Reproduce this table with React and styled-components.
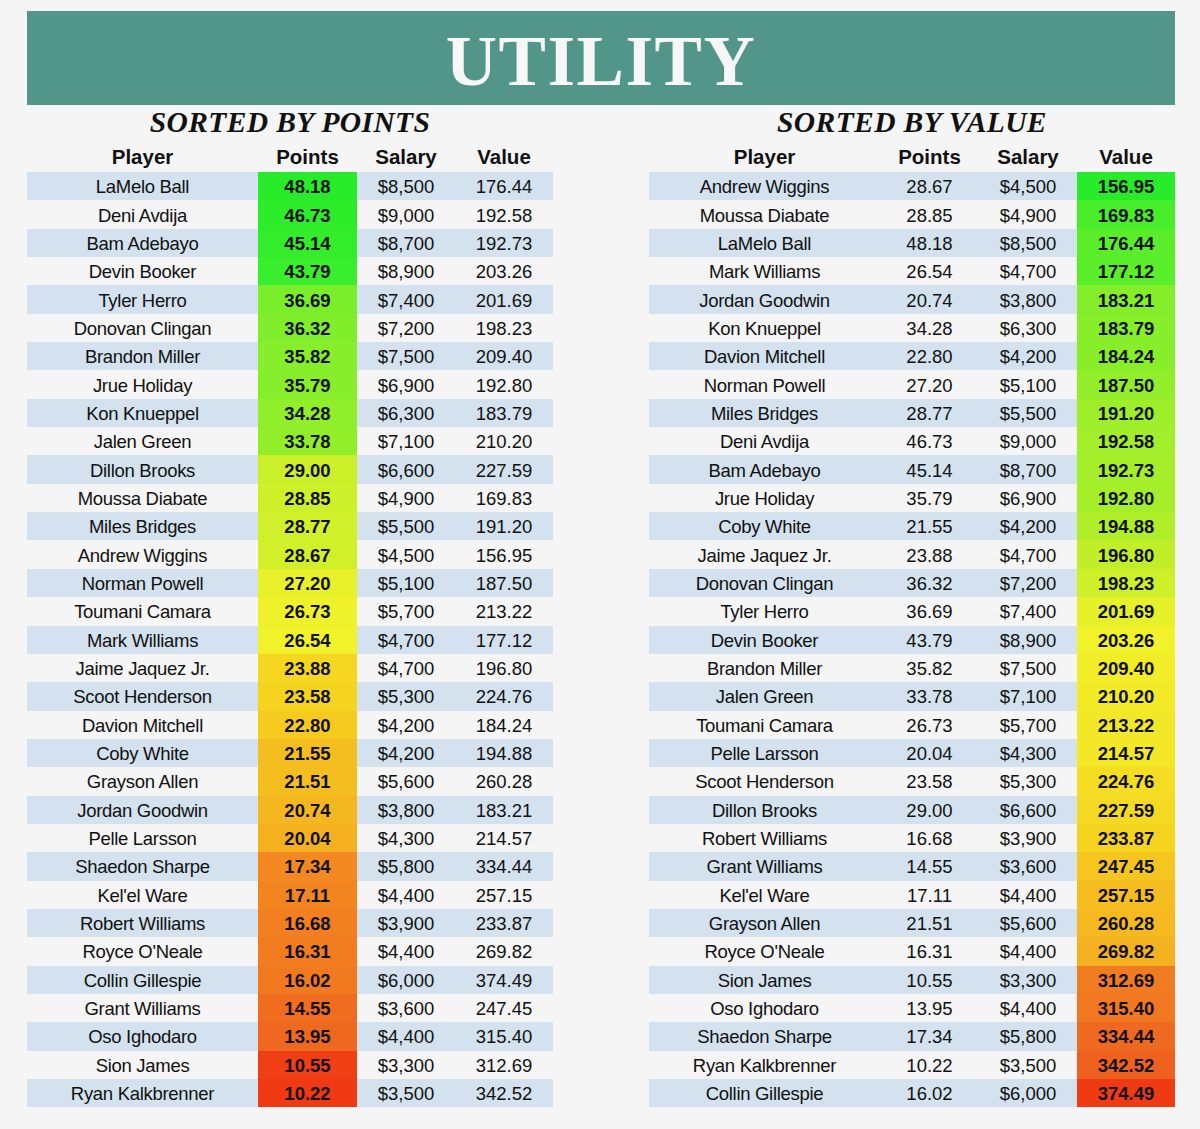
import styled, { createGlobalStyle } from "styled-components";

const GlobalStyle = createGlobalStyle`
  body {
    margin: 0;
    background: #f5f5f5;
    font-family: "Liberation Sans", Arial, sans-serif;
    color: #111;
  }
`;

const players = [
  ["LaMelo Ball", 48.18, 8500, 176.44],
  ["Deni Avdija", 46.73, 9000, 192.58],
  ["Bam Adebayo", 45.14, 8700, 192.73],
  ["Devin Booker", 43.79, 8900, 203.26],
  ["Tyler Herro", 36.69, 7400, 201.69],
  ["Donovan Clingan", 36.32, 7200, 198.23],
  ["Brandon Miller", 35.82, 7500, 209.4],
  ["Jrue Holiday", 35.79, 6900, 192.8],
  ["Kon Knueppel", 34.28, 6300, 183.79],
  ["Jalen Green", 33.78, 7100, 210.2],
  ["Dillon Brooks", 29.0, 6600, 227.59],
  ["Moussa Diabate", 28.85, 4900, 169.83],
  ["Miles Bridges", 28.77, 5500, 191.2],
  ["Andrew Wiggins", 28.67, 4500, 156.95],
  ["Norman Powell", 27.2, 5100, 187.5],
  ["Toumani Camara", 26.73, 5700, 213.22],
  ["Mark Williams", 26.54, 4700, 177.12],
  ["Jaime Jaquez Jr.", 23.88, 4700, 196.8],
  ["Scoot Henderson", 23.58, 5300, 224.76],
  ["Davion Mitchell", 22.8, 4200, 184.24],
  ["Coby White", 21.55, 4200, 194.88],
  ["Grayson Allen", 21.51, 5600, 260.28],
  ["Jordan Goodwin", 20.74, 3800, 183.21],
  ["Pelle Larsson", 20.04, 4300, 214.57],
  ["Shaedon Sharpe", 17.34, 5800, 334.44],
  ["Kel'el Ware", 17.11, 4400, 257.15],
  ["Robert Williams", 16.68, 3900, 233.87],
  ["Royce O'Neale", 16.31, 4400, 269.82],
  ["Collin Gillespie", 16.02, 6000, 374.49],
  ["Grant Williams", 14.55, 3600, 247.45],
  ["Oso Ighodaro", 13.95, 4400, 315.4],
  ["Sion James", 10.55, 3300, 312.69],
  ["Ryan Kalkbrenner", 10.22, 3500, 342.52],
].map(([name, points, salary, value]) => ({ name, points, salary, value }));

const byValue = [...players].sort((a, b) => a.value - b.value);

// colour stops, 0 = worst (red), 0.5 = median (yellow), 1 = best (green)
const stops = [
  [0, "#f03a14"],
  [0.1, "#ef6420"],
  [0.2, "#f28020"],
  [0.3, "#f5b020"],
  [0.37, "#f5c520"],
  [0.41, "#f5d420"],
  [0.5, "#f2f22a"],
  [0.55, "#d0f02a"],
  [0.6, "#a8ee2a"],
  [0.67, "#92ee2a"],
  [0.72, "#84ee2a"],
  [0.78, "#5cee2a"],
  [0.86, "#48ee2a"],
  [0.9, "#38ee2c"],
  [1, "#28ec2a"],
];

const hex = (h) => [1, 3, 5].map((i) => parseInt(h.slice(i, i + 2), 16));

function colorAt(t) {
  for (let i = 1; i < stops.length; i++) {
    const [t1, c1] = stops[i];
    const [t0, c0] = stops[i - 1];
    if (t <= t1) {
      const f = (t - t0) / (t1 - t0 || 1);
      const a = hex(c0);
      const b = hex(c1);
      return `rgb(${a.map((v, k) => Math.round(v + (b[k] - v) * f)).join(",")})`;
    }
  }
  return stops[stops.length - 1][1];
}

// three-colour scale with the midpoint at the median, like a spreadsheet
function makeScale(values, higherIsBetter) {
  const sorted = [...values].sort((a, b) => a - b);
  const min = sorted[0];
  const max = sorted[sorted.length - 1];
  const med = sorted[Math.floor(sorted.length / 2)];
  return (v) => {
    let t = v <= med ? 0.5 * ((v - min) / (med - min)) : 0.5 + 0.5 * ((v - med) / (max - med));
    if (!higherIsBetter) t = 1 - t;
    return colorAt(t);
  };
}

const pointsColor = makeScale(players.map((p) => p.points), true);
const valueColor = makeScale(players.map((p) => p.value), false);

const money = (n) => "$" + n.toLocaleString("en-US");

const Page = styled.div`
  width: 1200px;
  height: 1129px;
  padding: 11px 25px 0 27px;
  box-sizing: border-box;
`;

const Banner = styled.div`
  height: 94px;
  background: #52968a;
  display: flex;
  align-items: center;
  justify-content: center;
`;

const Title = styled.h1`
  margin: 0;
  padding-top: 6px;
  font-family: "Liberation Serif", "Times New Roman", serif;
  font-weight: 700;
  font-size: 71px;
  letter-spacing: 1.5px;
  color: #f7f7f7;
`;

const Columns = styled.div`
  display: flex;
  gap: 96px;
`;

const Section = styled.section`
  width: 526px;
`;

const Subtitle = styled.h2`
  margin: 0;
  height: 34px;
  line-height: 34px;
  text-align: center;
  font-family: "Liberation Serif", "Times New Roman", serif;
  font-style: italic;
  font-weight: 700;
  font-size: 29.5px;
  letter-spacing: 0.4px;
  color: #111;
`;

const Grid = styled.div`
  display: grid;
  grid-template-columns: 231px 99px 98px 98px;
`;

const HeadRow = styled(Grid)`
  height: 33px;
  box-sizing: border-box;
  padding-top: 2px;
`;

const HeadCell = styled.div`
  text-align: center;
  font-weight: 700;
  font-size: 20.5px;
  line-height: 31px;
`;

const Row = styled(Grid)`
  height: 28.35px;
  background: ${(p) => (p.$striped ? "#d3e2ee" : "transparent")};
`;

const Cell = styled.div`
  display: flex;
  align-items: center;
  justify-content: center;
  padding-top: 2px;
  font-size: 18.5px;
  font-weight: ${(p) => (p.$bold ? 700 : 400)};
  letter-spacing: ${(p) => (p.$name ? "-0.3px" : "0")};
  white-space: nowrap;
`;

function Table({ title, rows, colorKey }) {
  return (
    <Section>
      <Subtitle>{title}</Subtitle>
      <HeadRow>
        <HeadCell>Player</HeadCell>
        <HeadCell>Points</HeadCell>
        <HeadCell>Salary</HeadCell>
        <HeadCell>Value</HeadCell>
      </HeadRow>
      {rows.map((r, i) => (
        <Row key={r.name} $striped={i % 2 === 0}>
          <Cell $name>{r.name}</Cell>
          <Cell
            $bold={colorKey === "points"}
            style={colorKey === "points" ? { background: pointsColor(r.points) } : undefined}
          >
            {r.points.toFixed(2)}
          </Cell>
          <Cell>{money(r.salary)}</Cell>
          <Cell
            $bold={colorKey === "value"}
            style={colorKey === "value" ? { background: valueColor(r.value) } : undefined}
          >
            {r.value.toFixed(2)}
          </Cell>
        </Row>
      ))}
    </Section>
  );
}

export default function App() {
  return (
    <Page>
      <GlobalStyle />
      <Banner>
        <Title>UTILITY</Title>
      </Banner>
      <Columns>
        <Table title="SORTED BY POINTS" rows={players} colorKey="points" />
        <Table title="SORTED BY VALUE" rows={byValue} colorKey="value" />
      </Columns>
    </Page>
  );
}
